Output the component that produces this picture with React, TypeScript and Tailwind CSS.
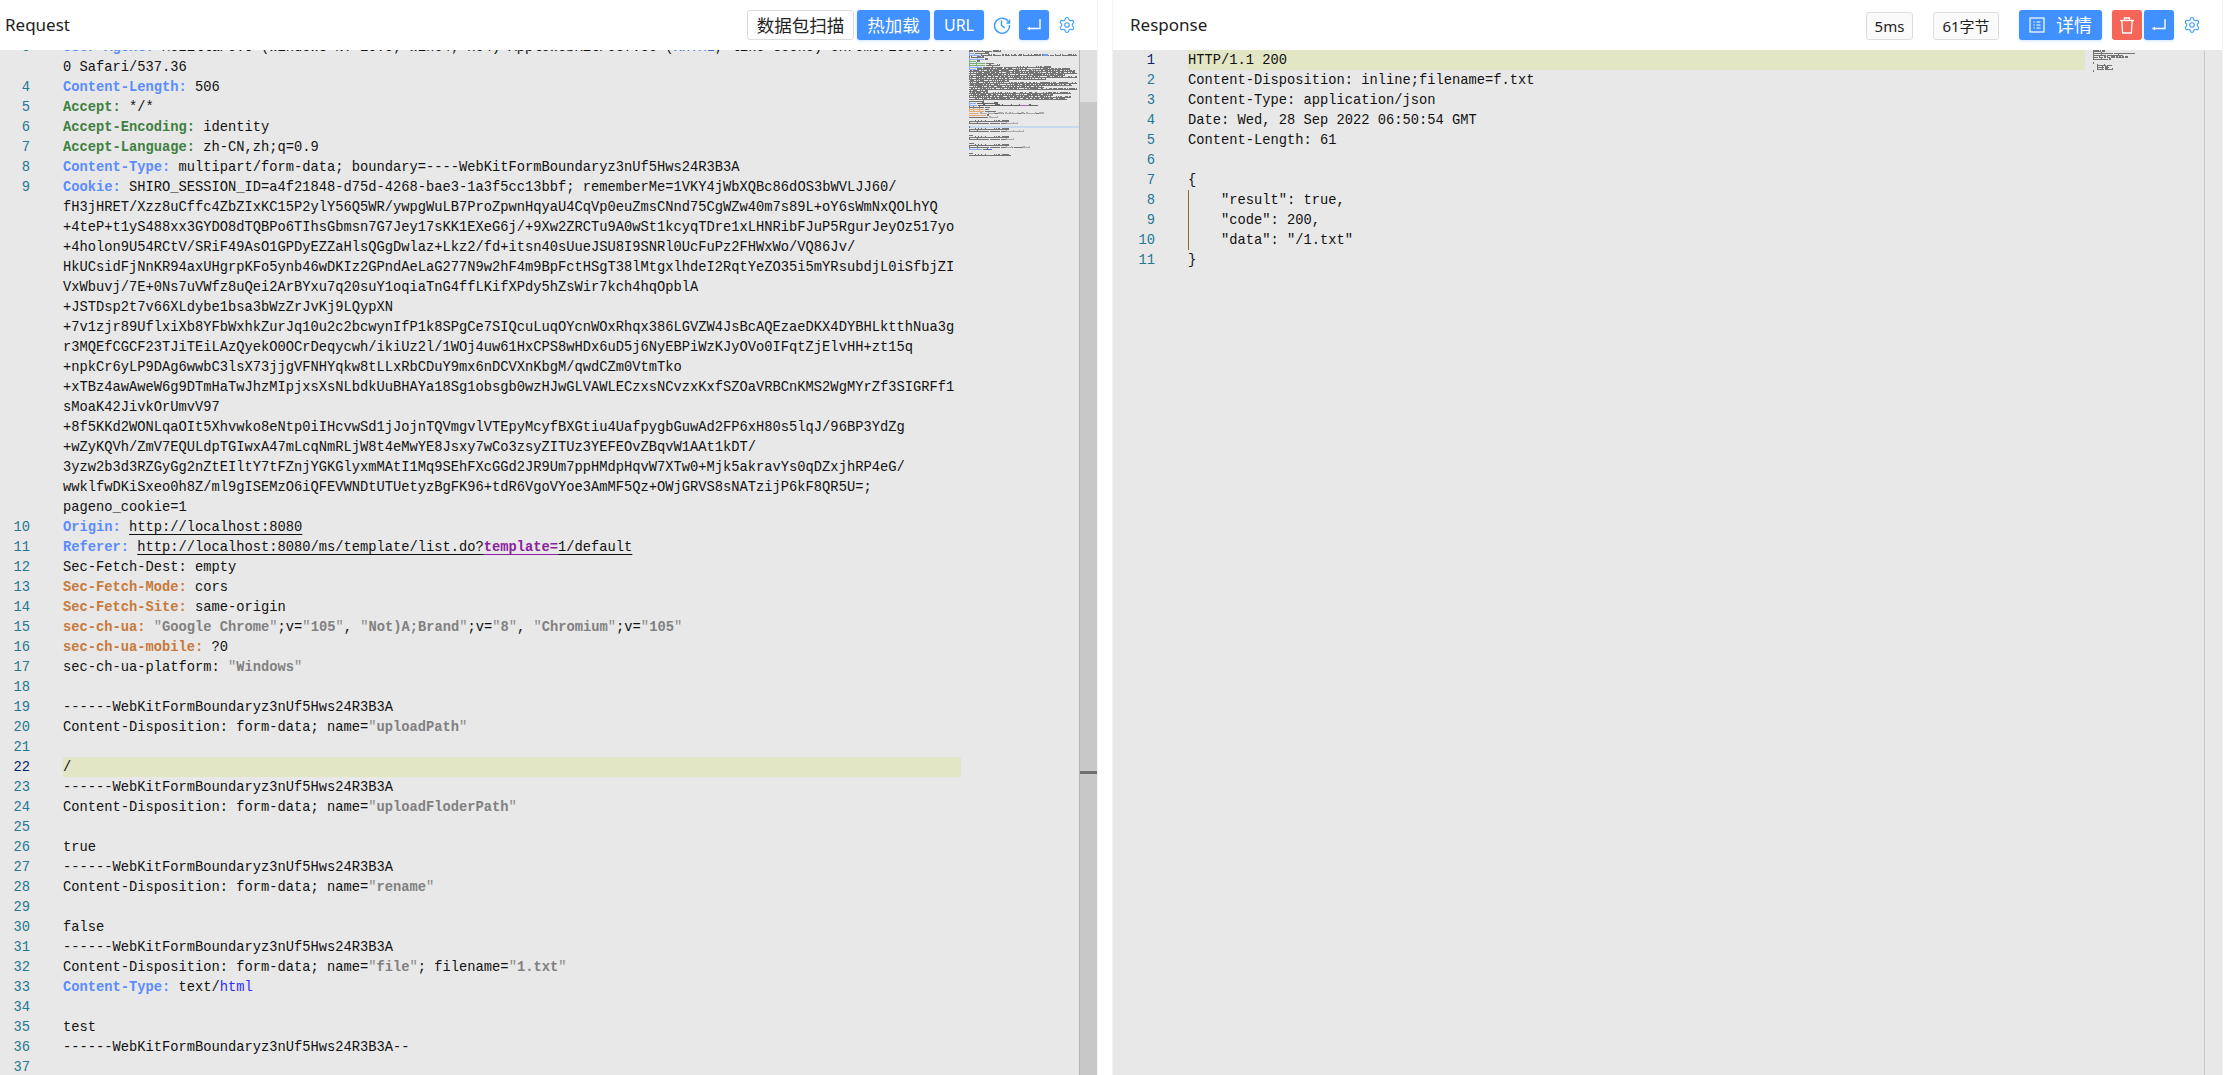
import { Settings } from 'lucide-react'

type Tone = 'plain' | 'blue' | 'green' | 'orange' | 'quote' | 'str' | 'link' | 'param' | 'type' | 'kw'
type Seg = [string, Tone]
type Row = { n?: number; segs: Seg[]; active?: boolean; guide?: boolean }

const toneClass: Record<Tone, string> = {
  plain: 'text-[#111111]',
  blue: 'text-[#5b8cff] font-bold',
  green: 'text-[#3f7f3f] font-bold',
  orange: 'text-[#c9793a] font-bold',
  quote: 'text-[#8a8a8a]',
  str: 'text-[#808080] font-bold',
  link: 'text-[#111111] underline underline-offset-[3px]',
  param: 'text-[#8b1fa0] font-bold underline underline-offset-[3px]',
  type: 'text-[#2b2bff]',
  kw: 'text-[#3a6fd8]',
}

const minimapColor: Record<Tone, string> = {
  plain: '#555555',
  blue: '#6f9bff',
  green: '#5f9f5f',
  orange: '#dc9a5c',
  quote: '#a0a0a0',
  str: '#9a9a9a',
  link: '#444444',
  param: '#a040b0',
  type: '#3a3aff',
  kw: '#5a86e0',
}

const p = (text: string): Seg => [text, 'plain']
const q = (text: string): Seg[] => [['"', 'quote'], [text, 'str'], ['"', 'quote']]
const boundary = '------WebKitFormBoundaryz3nUf5Hws24R3B3A'
const row = (n: number | undefined, ...segs: (Seg | Seg[])[]): Row => ({
  n,
  segs: segs.flatMap((s) => (Array.isArray(s[0]) ? (s as Seg[]) : [s as Seg])),
})
const cont = (text: string) => row(undefined, p(text))

const requestRows: Row[] = [
  row(3, ['User-Agent:', 'blue'], p(' Mozilla/5.0 (Windows NT 10.0; Win64; x64) AppleWebKit/537.36 ('), ['KHTML', 'kw'], p(', like Gecko) Chrome/105.0.0.')),
  cont('0 Safari/537.36'),
  row(4, ['Content-Length:', 'blue'], p(' 506')),
  row(5, ['Accept:', 'green'], p(' */*')),
  row(6, ['Accept-Encoding:', 'green'], p(' identity')),
  row(7, ['Accept-Language:', 'green'], p(' zh-CN,zh;q=0.9')),
  row(8, ['Content-Type:', 'blue'], p(' multipart/form-data; boundary=----WebKitFormBoundaryz3nUf5Hws24R3B3A')),
  row(9, ['Cookie:', 'blue'], p(' SHIRO_SESSION_ID=a4f21848-d75d-4268-bae3-1a3f5cc13bbf; rememberMe=1VKY4jWbXQBc86dOS3bWVLJJ60/')),
  cont('fH3jHRET/Xzz8uCffc4ZbZIxKC15P2ylY56Q5WR/ywpgWuLB7ProZpwnHqyaU4CqVp0euZmsCNnd75CgWZw40m7s89L+oY6sWmNxQOLhYQ'),
  cont('+4teP+t1yS488xx3GYDO8dTQBPo6TIhsGbmsn7G7Jey17sKK1EXeG6j/+9Xw2ZRCTu9A0wSt1kcyqTDre1xLHNRibFJuP5RgurJeyOz517yo'),
  cont('+4holon9U54RCtV/SRiF49AsO1GPDyEZZaHlsQGgDwlaz+Lkz2/fd+itsn40sUueJSU8I9SNRl0UcFuPz2FHWxWo/VQ86Jv/'),
  cont('HkUCsidFjNnKR94axUHgrpKFo5ynb46wDKIz2GPndAeLaG277N9w2hF4m9BpFctHSgT38lMtgxlhdeI2RqtYeZO35i5mYRsubdjL0iSfbjZI'),
  cont('VxWbuvj/7E+0Ns7uVWfz8uQei2ArBYxu7q20suY1oqiaTnG4ffLKifXPdy5hZsWir7kch4hqOpblA'),
  cont('+JSTDsp2t7v66XLdybe1bsa3bWzZrJvKj9LQypXN'),
  cont('+7v1zjr89UflxiXb8YFbWxhkZurJq10u2c2bcwynIfP1k8SPgCe7SIQcuLuqOYcnWOxRhqx386LGVZW4JsBcAQEzaeDKX4DYBHLktthNua3g'),
  cont('r3MQEfCGCF23TJiTEiLAzQyekO0OCrDeqycwh/ikiUz2l/1WOj4uw61HxCPS8wHDx6uD5j6NyEBPiWzKJyOVo0IFqtZjElvHH+zt15q'),
  cont('+npkCr6yLP9DAg6wwbC3lsX73jjgVFNHYqkw8tLLxRbCDuY9mx6nDCVXnKbgM/qwdCZm0VtmTko'),
  cont('+xTBz4awAweW6g9DTmHaTwJhzMIpjxsXsNLbdkUuBHAYa18Sg1obsgb0wzHJwGLVAWLECzxsNCvzxKxfSZOaVRBCnKMS2WgMYrZf3SIGRFf1'),
  cont('sMoaK42JivkOrUmvV97'),
  cont('+8f5KKd2WONLqaOIt5Xhvwko8eNtp0iIHcvwSd1jJojnTQVmgvlVTEpyMcyfBXGtiu4UafpygbGuwAd2FP6xH80s5lqJ/96BP3YdZg'),
  cont('+wZyKQVh/ZmV7EQULdpTGIwxA47mLcqNmRLjW8t4eMwYE8Jsxy7wCo3zsyZITUz3YEFEOvZBqvW1AAt1kDT/'),
  cont('3yzw2b3d3RZGyGg2nZtEIltY7tFZnjYGKGlyxmMAtI1Mq9SEhFXcGGd2JR9Um7ppHMdpHqvW7XTw0+Mjk5akravYs0qDZxjhRP4eG/'),
  cont('wwklfwDKiSxeo0h8Z/ml9gISEMzO6iQFEVWNDtUTUetyzBgFK96+tdR6VgoVYoe3AmMF5Qz+OWjGRVS8sNATzijP6kF8QR5U=;'),
  cont('pageno_cookie=1'),
  row(10, ['Origin:', 'blue'], p(' '), ['http://localhost:8080', 'link']),
  row(11, ['Referer:', 'blue'], p(' '), ['http://localhost:8080/ms/template/list.do?', 'link'], ['template=', 'param'], ['1/default', 'link']),
  row(12, p('Sec-Fetch-Dest: empty')),
  row(13, ['Sec-Fetch-Mode:', 'orange'], p(' cors')),
  row(14, ['Sec-Fetch-Site:', 'orange'], p(' same-origin')),
  row(15, ['sec-ch-ua:', 'orange'], p(' '), q('Google Chrome'), p(';v='), q('105'), p(', '), q('Not)A;Brand'), p(';v='), q('8'), p(', '), q('Chromium'), p(';v='), q('105')),
  row(16, ['sec-ch-ua-mobile:', 'orange'], p(' ?0')),
  row(17, p('sec-ch-ua-platform: '), q('Windows')),
  row(18),
  row(19, p(boundary)),
  row(20, p('Content-Disposition: form-data; name='), q('uploadPath')),
  row(21),
  { ...row(22, p('/')), active: true },
  row(23, p(boundary)),
  row(24, p('Content-Disposition: form-data; name='), q('uploadFloderPath')),
  row(25),
  row(26, p('true')),
  row(27, p(boundary)),
  row(28, p('Content-Disposition: form-data; name='), q('rename')),
  row(29),
  row(30, p('false')),
  row(31, p(boundary)),
  row(32, p('Content-Disposition: form-data; name='), q('file'), p('; filename='), q('1.txt')),
  row(33, ['Content-Type:', 'blue'], p(' text/'), ['html', 'type']),
  row(34),
  row(35, p('test')),
  row(36, p(boundary + '--')),
  row(37),
]

const requestMinimap: Row[] = [row(1, p('POST /ms/file/upload.do HTTP/1.1')), row(2, ['Host:', 'blue'], p(' localhost:8080')), ...requestRows]

const responseRows: Row[] = [
  { ...row(1, p('HTTP/1.1 200')), active: true },
  row(2, p('Content-Disposition: inline;filename=f.txt')),
  row(3, p('Content-Type: application/json')),
  row(4, p('Date: Wed, 28 Sep 2022 06:50:54 GMT')),
  row(5, p('Content-Length: 61')),
  row(6),
  row(7, p('{')),
  { ...row(8, p('    "result": true,')), guide: true },
  { ...row(9, p('    "code": 200,')), guide: true },
  { ...row(10, p('    "data": "/1.txt"')), guide: true },
  row(11, p('}')),
]

function Minimap({ rows, width, mark }: { rows: Row[]; width: number; mark?: number }) {
  const paths: Record<string, string> = {}
  rows.forEach((r, y) => {
    let x = 0
    r.segs.forEach(([text, tone]) => {
      const color = minimapColor[tone]
      for (const ch of text) {
        if (ch !== ' ') {
          const low = /[a-z.,;:=\-_+]/.test(ch)
          paths[color] = (paths[color] || '') + `M${x} ${y * 2 + (low ? 1 : 0)}h1v${low ? 1 : 2}h-1z`
        }
        x++
      }
    })
  })
  return (
    <svg width={width} height={1025} className="shrink-0 block" shapeRendering="crispEdges">
      {mark !== undefined && <rect x={0} y={mark * 2} width={width} height={2} fill="#c6d9ee" />}
      {Object.entries(paths).map(([color, d]) => (
        <path key={color} d={d} fill={color} fillOpacity={0.8} />
      ))}
    </svg>
  )
}

function Editor({ rows, numWidth, offset, children }: { rows: Row[]; numWidth: string; offset: string; children: React.ReactNode }) {
  return (
    <div className="flex-1 flex min-h-0 bg-[#e8e8e8] overflow-hidden">
      <div className="flex-1 min-w-0 overflow-hidden pr-2">
        <div className={`${offset} font-['Liberation_Mono',monospace] text-[13.75px] leading-[22px]`}>
          {rows.map((r, i) => (
            <div key={i} className="flex h-5">
              <div className={`${numWidth} shrink-0 text-right ${r.active ? 'text-[#0b216f]' : 'text-[#237893]'}`}>{r.n}</div>
              <div className={`relative flex-1 ml-[33px] whitespace-pre ${r.active ? 'bg-[#e2e6c4]' : ''}`}>
                {r.guide && <span className="absolute left-0 top-0 h-5 w-px bg-[#8a6a2a]" />}
                {r.segs.map(([text, tone], j) => (
                  <span key={j} className={toneClass[tone]}>
                    {text}
                  </span>
                ))}
              </div>
            </div>
          ))}
        </div>
      </div>
      {children}
    </div>
  )
}

function ClockIcon() {
  return (
    <svg width="18" height="18" viewBox="0 0 18 18" fill="none" stroke="#409eff" strokeWidth="1.5">
      <path d="M15.8 6.5A7.5 7.5 0 1 0 16.5 9" />
      <path d="M8.5 4.5V9.3L11.8 12" />
      <path d="M16.6 3.6V7H13.4" strokeWidth="1.3" />
    </svg>
  )
}

function WrapIcon() {
  return (
    <svg width="16" height="16" viewBox="0 0 16 16" fill="none" stroke="white" strokeWidth="1.4">
      <path d="M14 2V11.5H1.5" />
      <path d="M4 9.5L1.5 11.5L4 13.5" fill="white" stroke="none" />
    </svg>
  )
}

function TrashIcon() {
  return (
    <svg width="16" height="17" viewBox="0 0 16 17" fill="none" stroke="white" strokeWidth="1.3">
      <path d="M1 3.5H15" />
      <path d="M5.5 3.5V1H10.5V3.5" />
      <path d="M2.8 3.5L3.6 16H12.4L13.2 3.5" />
    </svg>
  )
}

function DetailIcon() {
  return (
    <svg width="16" height="16" viewBox="0 0 16 16" fill="none" stroke="white" strokeWidth="1.2">
      <rect x="1" y="1" width="14" height="14" />
      <path d="M4.5 5H5.8M7.5 5H11.5M4.5 8H5.8M7.5 8H11.5M4.5 11H5.8M7.5 11H11.5" />
    </svg>
  )
}

const cjk = "font-['Noto_Sans','Noto_Sans_CJK_SC',sans-serif]"
const blueButton = `h-[30px] rounded-[3px] bg-[#4090ff] text-white flex items-center justify-center shadow-[0_1px_3px_rgba(64,144,255,0.25)] ${cjk}`

export default function App() {
  return (
    <div className={`flex w-full h-[1075px] overflow-hidden bg-white ${cjk}`}>
      <section className="w-[1097px] shrink-0 flex flex-col">
        <header className="h-[50px] shrink-0 flex items-center pl-[5px] pr-3">
          <h2 className="text-[17px] text-[#222222] mr-auto">Request</h2>
          <button className="h-[30px] w-[107px] rounded-[3px] border border-[#dddddd] bg-white text-[17.5px] text-[#222222]">数据包扫描</button>
          <button className={`${blueButton} w-[73px] ml-[3px] text-[17.5px]`}>热加载</button>
          <button className={`${blueButton} w-[50px] ml-1 text-[16px]`}>URL</button>
          <span className="w-[35px] flex justify-center">
            <ClockIcon />
          </span>
          <button className={`${blueButton} w-[30px]`}>
            <WrapIcon />
          </button>
          <span className="w-[36px] flex justify-center">
            <Settings size={18} strokeWidth={1.5} color="#409eff" />
          </span>
        </header>
        <Editor rows={requestRows} numWidth="w-[30px]" offset="-mt-[13px]">
          <Minimap rows={requestMinimap} width={110} mark={38} />
          <div className="relative w-[18px] shrink-0 flex flex-col border-l border-[#b4b4b4]">
            <div className="h-[52px] bg-[#e0e0e0]" />
            <div className="flex-1 bg-[#c8c8c8]" />
            <div className="absolute left-0 right-0 top-[721px] h-[3px] bg-[#6f6f6f]" />
          </div>
        </Editor>
      </section>

      <div className="w-4 shrink-0 border-x border-[#f3f3f3]" />

      <section className="w-[1109px] shrink-0 flex flex-col">
        <header className="h-[50px] shrink-0 flex items-center pl-[17px] pr-[13px]">
          <h2 className="text-[17px] text-[#222222] mr-auto">Response</h2>
          <span className="h-7 w-[47px] mt-[2px] flex items-center justify-center rounded-[3px] border border-[#dddddd] bg-[#fafafa] text-[15px] text-[#222222]">5ms</span>
          <span className="h-7 w-[66px] mt-[2px] ml-5 flex items-center justify-center rounded-[3px] border border-[#dddddd] bg-[#fafafa] text-[15px] text-[#222222]">61字节</span>
          <button className={`${blueButton} w-[83px] ml-5 gap-[11px] text-[18px]`}>
            <DetailIcon />
            详情
          </button>
          <button className="h-[30px] w-[30px] ml-[10px] rounded-[3px] bg-[#f56558] flex items-center justify-center">
            <TrashIcon />
          </button>
          <button className={`${blueButton} w-[30px] ml-[2px]`}>
            <WrapIcon />
          </button>
          <span className="w-[35px] flex justify-center">
            <Settings size={18} strokeWidth={1.5} color="#409eff" />
          </span>
        </header>
        <Editor rows={responseRows} numWidth="w-[42px]" offset="">
          <Minimap rows={responseRows} width={111} />
          <div className="w-[18px] shrink-0 bg-[#e8e8e8] border-l border-[#c8c8c8]" />
        </Editor>
      </section>

      <div className="flex-1 border-l border-[#f3f3f3]" />
    </div>
  )
}
